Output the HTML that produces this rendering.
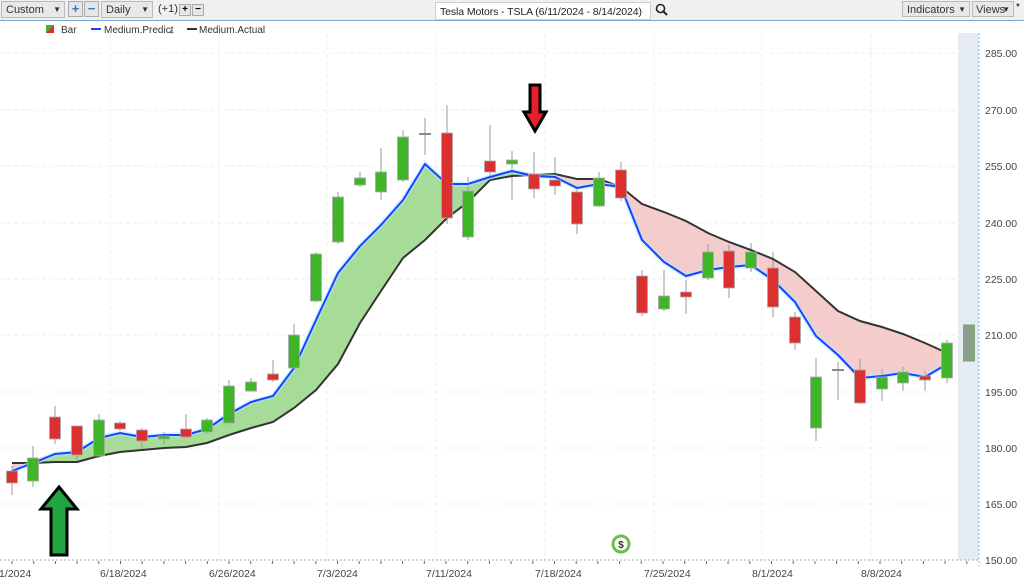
<!DOCTYPE html>
<html><head><meta charset="utf-8"><style>
body{margin:0;width:1024px;height:584px;overflow:hidden;background:#fff;font-family:"Liberation Sans",sans-serif;}
.tb{position:absolute;left:0;top:0;width:1024px;height:20px;background:#f0f0f0;border-bottom:1px solid #7aa7cf;}
.dd{position:absolute;top:1px;height:16px;border:1px solid #bbb;background:#e8e8e8;font-size:11px;line-height:16px;padding-left:4px;color:#333;box-sizing:border-box;white-space:nowrap}
.dd:after{content:"▼";position:absolute;right:3px;font-size:8px;}
.btn{position:absolute;top:1px;width:13px;height:14px;border:1px solid #aaa;background:#e6e6e6;font-size:13px;line-height:13px;text-align:center;font-weight:bold;color:#2a7fd0}
svg text{font-family:"Liberation Sans",sans-serif;}
</style></head><body>
<div class="tb">
<div class="dd" style="left:1px;width:64px;height:17px">Custom</div>
<div class="btn" style="left:68px">+</div><div class="btn" style="left:84px">−</div>
<div class="dd" style="left:101px;width:52px;height:17px">Daily</div>
<div style="position:absolute;left:158px;top:3px;font-size:11px;color:#333">(+1)</div>
<div class="btn" style="left:179px;width:10px;height:10px;top:4px;color:#000;font-size:10px;line-height:10px">+</div>
<div class="btn" style="left:192px;width:10px;height:10px;top:4px;color:#000;font-size:10px;line-height:10px">−</div>
<div style="position:absolute;left:435px;top:2px;width:216px;height:18px;border:1px solid #ccc;background:#fff;font-size:10.5px;letter-spacing:-0.1px;line-height:18px;padding-left:4px;box-sizing:border-box;color:#222;white-space:nowrap;overflow:hidden">Tesla Motors - TSLA (6/11/2024 - 8/14/2024)</div>
<svg style="position:absolute;left:655px;top:3px" width="14" height="14"><circle cx="5.5" cy="5.5" r="4" fill="none" stroke="#222" stroke-width="1.6"/><line x1="8.5" y1="8.5" x2="12" y2="12" stroke="#222" stroke-width="2"/></svg>
<div class="dd" style="left:902px;width:68px;height:16px">Indicators</div>
<div class="dd" style="left:972px;width:42px;height:16px;padding-left:3px">Views</div>
<div style="position:absolute;left:1016px;top:2px;font-size:10px">*</div>
</div>
<svg id="s" width="1024" height="584" style="position:absolute;left:0;top:0"></svg>
<script>
const s=document.getElementById('s');let h='';
h+='<rect x="958" y="33" width="21" height="527" fill="#e4ebf4"/>';
const ys=[53,110,166,223,279,335,392,448,504,560],lb=['285.00','270.00','255.00','240.00','225.00','210.00','195.00','180.00','165.00','150.00'];
ys.forEach((y,i)=>{if(i<9)h+=`<line x1="0" x2="979" y1="${y}" y2="${y}" stroke="#ececec" stroke-dasharray="4,3"/>`;h+=`<text x="985" y="${y+4}" font-size="10.5" fill="#444">${lb[i]}</text>`;});
const gx=[110,219,327,436,545,654,762,871],dl=['6/18/2024','6/26/2024','7/3/2024','7/11/2024','7/18/2024','7/25/2024','8/1/2024','8/8/2024'];
gx.forEach((x,i)=>{h+=`<line x1="${x}" x2="${x}" y1="33" y2="564" stroke="#ececec" stroke-dasharray="4,3"/><text x="${x-10}" y="577" font-size="10.5" fill="#444">${dl[i]}</text>`;});
h+='<text x="-6" y="577" font-size="10.5" fill="#444">11/2024</text>';
h+='<line x1="0" x2="980" y1="560" y2="560" stroke="#8ab8e0" stroke-dasharray="2,2"/><line x1="979" x2="979" y1="33" y2="566" stroke="#8ab8e0" stroke-dasharray="2,2"/>';
for(let x=12;x<979;x+=21.7)h+=`<line x1="${x}" x2="${x}" y1="561" y2="564" stroke="#666"/>`;
const X=[12,33,55,77,99,120,142,164,186,207,229,251,273,294,316,338,360,381,403,425,447,468,490,512,534,555,577,599,621,642,664,686,708,729,751,773,795,816,838,860,882,903,925,947];
const B=[471,463,454,452,438,433,437,435,435,429,414,402,396,368,320,273,246,225,200,164,184,184,177,171,176,177,188,184,187,240,262,276,270,267,265,280,302,336,355,378,376,373,377,364];
const K=[463,463,462,462,456,452,450,448,447,443,435,428,422,408,390,364,323,291,258,240,218,202,180,176,175,174,179,179,187,204,212,221,233,242,250,259,272,291,311,321,327,334,343,353];
function poly(a,b,i0,i1,c){let p=[];for(let i=i0;i<=i1;i++)p.push(X[i]+','+a[i]);for(let i=i1;i>=i0;i--)p.push(X[i]+','+b[i]);return `<polygon points="${p.join(' ')}" fill="${c}"/>`;}
h+=poly(B,K,0,1,'#f4c9c9');h+=poly(B,K,1,24,'#a6dc98');h+=poly(B,K,24,43,'#f5cccc');
const C=[[12,471,483,466,495,'r'],[33,458,481,446,487,'g'],[55,417,439,406,444,'r'],[77,426,455,426,460,'r'],[99,420,456,414,458,'g'],[120,423,429,421,431,'r'],[142,430,441,428,449,'r'],[164,436,439,432,444,'g'],[186,429,437,414,438,'r'],[207,420,432,418,434,'g'],[229,386,423,380,425,'g'],[251,382,391,378,392,'g'],[273,374,380,360,382,'r'],[294,335,368,324,370,'g'],[316,254,301,252,302,'g'],[338,197,242,192,244,'g'],[360,178,185,172,187,'g'],[381,172,192,148,200,'g'],[403,137,180,130,182,'g'],[425,134,134,118,155,'d'],[447,133,218,105,224,'r'],[468,191,237,177,240,'g'],[490,161,172,125,177,'r'],[512,160,164,151,200,'g'],[534,174,189,152,198,'r'],[555,180,186,157,195,'r'],[577,192,224,186,234,'r'],[599,178,206,172,207,'g'],[621,170,198,162,201,'r'],[642,276,313,270,316,'r'],[664,296,309,270,311,'g'],[686,292,297,280,314,'r'],[708,252,278,244,280,'g'],[729,251,288,245,298,'r'],[751,252,268,243,272,'g'],[773,268,307,252,317,'r'],[795,317,343,312,350,'r'],[816,377,428,358,441,'g'],[838,370,370,362,400,'d'],[860,370,403,359,404,'r'],[882,377,389,369,401,'g'],[903,372,383,367,391,'g'],[925,376,380,371,391,'r'],[947,343,378,340,383,'g']];
C.forEach(c=>{h+=`<line x1="${c[0]}" x2="${c[0]}" y1="${c[3]}" y2="${c[4]}" stroke="#999"/>`;});
const L=(a)=>X.map((x,i)=>x+','+a[i]).join(' ');
h+=`<polyline points="${L(K)}" fill="none" stroke="#333" stroke-width="2"/>`;
h+=`<polyline points="${L(B)}" fill="none" stroke="#aef" stroke-width="5" opacity=".6"/><polyline points="${L(B)}" fill="none" stroke="#1f3fff" stroke-width="2"/>`;
C.forEach(c=>{if(c[5]=='d'){h+=`<line x1="${c[0]-6}" x2="${c[0]+6}" y1="${c[1]}" y2="${c[1]}" stroke="#888" stroke-width="2"/>`;return;}
h+=`<rect x="${c[0]-5.5}" y="${c[1]}" width="11" height="${Math.max(c[2]-c[1],2)}" fill="${c[5]=='r'?'#dc3030':'#40b52a'}" stroke="#aaa" stroke-width=".8"/>`;});
h+='<rect x="963.5" y="325" width="11" height="36" fill="#8a9e8a" stroke="#7a7" />';
h+='<polygon points="59,487 77,509 67,509 67,555 51,555 51,509 41,509" fill="#22a540" stroke="#000" stroke-width="3" stroke-linejoin="miter"/>';
h+='<polygon points="530,85 540,85 540,112 546,112 535,131 524,112 530,112" fill="#e8202a" stroke="#000" stroke-width="3"/>';
h+='<circle cx="621" cy="544" r="8" fill="none" stroke="#6cc04a" stroke-width="3"/><text x="621" y="548" font-size="10" font-weight="bold" text-anchor="middle" fill="#333">$</text>';
h+='<rect x="46" y="25" width="8" height="8" fill="#dc3030"/><polygon points="46,33 54,25 46,25" fill="#40b52a"/><text x="61" y="33" font-size="10" fill="#333">Bar</text>';
h+='<line x1="91" x2="101" y1="29" y2="29" stroke="#1f3fff" stroke-width="2"/><text x="104" y="33" font-size="10" fill="#333">Medium.Predict</text><circle cx="171" cy="32" r="1.5" fill="#48a"/>';
h+='<line x1="187" x2="197" y1="29" y2="29" stroke="#333" stroke-width="2"/><text x="199" y="33" font-size="10" fill="#333">Medium.Actual</text>';
s.innerHTML=h;
</script>
</body></html>
